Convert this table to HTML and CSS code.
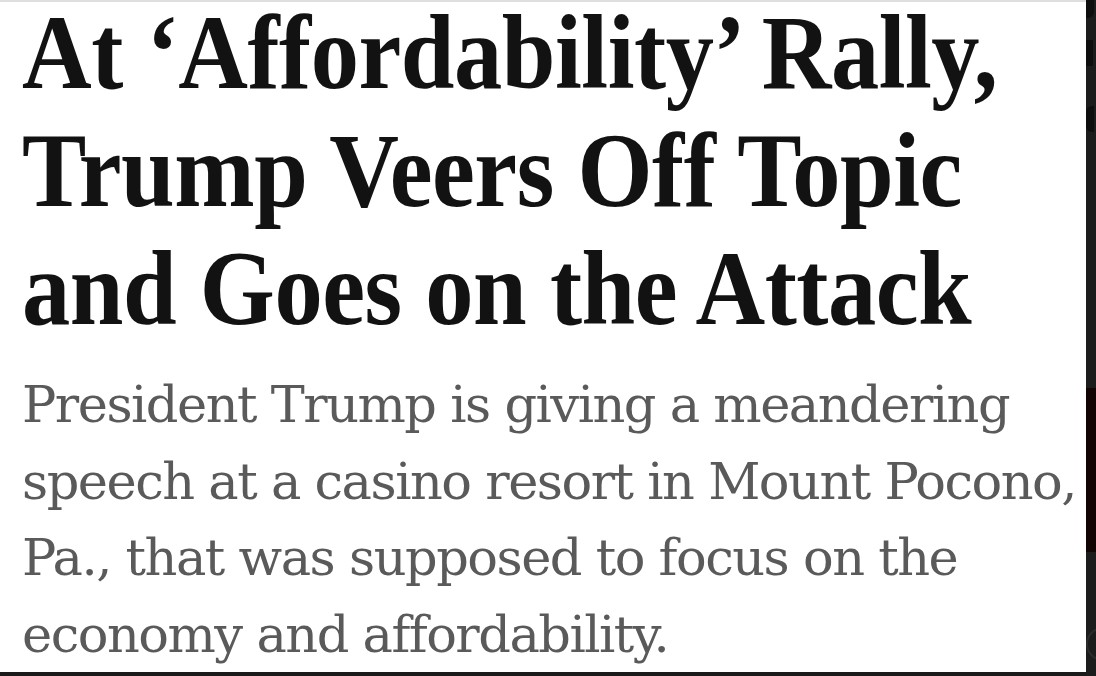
FILE: index.html
```html
<!DOCTYPE html>
<html lang="en">
<head>
<meta charset="utf-8">
<title>At ‘Affordability’ Rally, Trump Veers Off Topic and Goes on the Attack</title>
<link rel="stylesheet" href="styles.css">
</head>
<body>
<div class="screen">
  <article class="story">
    <h1 class="headline">
      <span class="headline-line">At ‘Affordability’ Rally,</span>
      <span class="headline-line">Trump Veers Off Topic</span>
      <span class="headline-line">and Goes on the Attack</span>
    </h1>
    <p class="summary">President Trump is giving a meandering speech at a casino resort in Mount Pocono, Pa., that was supposed to focus on the economy and affordability.</p>
  </article>
  <aside class="side" aria-hidden="true">
    <div class="side-mark side-mark-o"></div>
    <div class="side-mark side-mark-v"></div>
    <div class="side-mark side-mark-e"></div>
    <div class="side-band"></div>
    <div class="side-ring"></div>
  </aside>
</div>
</body>
</html>
```
FILE: styles.css
```css
html, body {
  margin: 0;
  padding: 0;
  background: #1a1a1a;
}

.screen {
  display: flex;
  width: 1096px;
  height: 676px;
  overflow: hidden;
}

.story {
  flex: 0 0 1086px;
  height: 672px;
  box-sizing: border-box;
  background: #ffffff;
  border-top: 2px solid #dedede;
  padding: 0 10px 0 22px;
  overflow: hidden;
}

.headline {
  margin: -8px 0 0 0;
  font-family: "Liberation Serif", "Times New Roman", serif;
  font-weight: 700;
  font-size: 106px;
  line-height: 118px;
  color: #121212;
  letter-spacing: -0.5px;
}

.headline-line {
  display: block;
  white-space: nowrap;
  transform: scaleX(0.91);
  transform-origin: left top;
}

.summary {
  margin: 19px 0 0 0;
  font-family: "DejaVu Serif", Georgia, serif;
  font-size: 51px;
  line-height: 76.5px;
  letter-spacing: -1.5px;
  color: #5a5a5a;
}

/* neighbouring dark panel, only a sliver visible */
.side {
  flex: 1 1 auto;
  display: flex;
  flex-direction: column;
  background: #1c1c1c;
  overflow: hidden;
}

.side-mark {
  flex: 0 0 auto;
  background: #0e0e0e;
}

.side-mark-o {
  width: 8px;
  height: 18px;
  border-radius: 0 0 6px 0;
}

.side-mark-v {
  margin-top: 22px;
  width: 7px;
  height: 26px;
}

.side-mark-e {
  margin-top: 40px;
  width: 8px;
  height: 26px;
  border-radius: 6px 0 0 6px;
}

.side-band {
  flex: 0 0 auto;
  margin-top: 256px;
  height: 164px;
  background: #130404;
}

.side-ring {
  flex: 0 0 auto;
  margin-top: 75px;
  width: 30px;
  height: 30px;
  border: 2px solid #2c2c2c;
  border-radius: 50%;
}
```
